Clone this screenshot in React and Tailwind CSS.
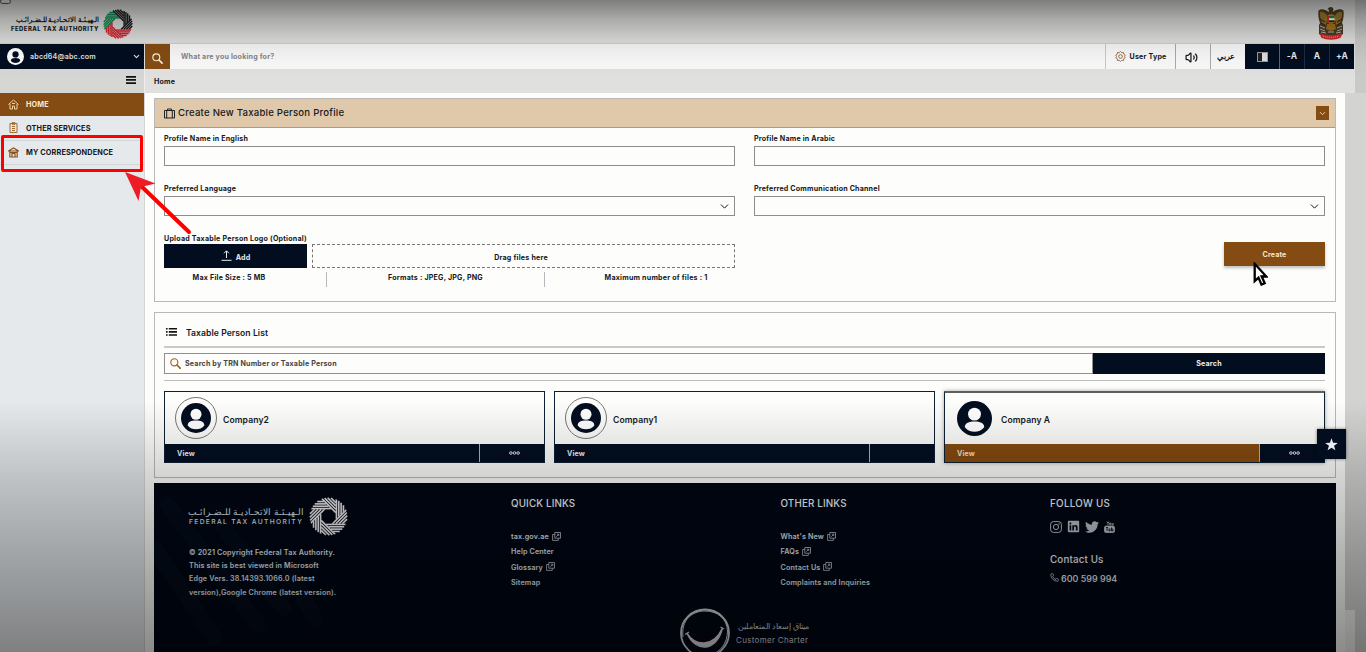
import React from "react";
import { ChevronDown, Volume2, Phone } from "lucide-react";
import { FaLinkedin, FaTwitter } from "react-icons/fa";

const SEGMENTS = ["#0d8a50", "#222", "#1b1b1b", "#1b1b1b", "#d8232f", "#d8232f", "#d8232f", "#0d8a50"];
const MONO = ["#eeeef2", "#eeeef2", "#eeeef2", "#eeeef2", "#eeeef2", "#eeeef2", "#eeeef2", "#eeeef2"];

function Swirl({ className, colors, weight = 1.25 }) {
  const a = 5.6;
  const R = 14.4;
  const lines = [];
  for (let k = 0; k < 8; k++) {
    for (let i = 0; i < 5; i++) {
      const h = a + 0.5 + i * 1.8;
      lines.push(
        <line
          key={k + "-" + i}
          x1={-Math.sqrt(Math.max(0, R * R - h * h))}
          x2={1.414 * a - h}
          y1={-h}
          y2={-h}
          stroke={colors[k]}
          strokeWidth={weight}
          transform={"rotate(" + k * 45 + ")"}
        />
      );
    }
  }
  return (
    <svg viewBox="-15 -15 30 30" className={className}>
      {lines}
    </svg>
  );
}

function Avatar({ className, bg = "#020e20", fg = "#fff" }) {
  return (
    <svg viewBox="0 0 36 36" className={className}>
      <circle cx="18" cy="18" r="18" fill={bg} />
      <circle cx="18" cy="13.500" r="6.600" fill={fg} />
      <path d="M8 27c0-4.600 4.500-6 10-6s10 1.400 10 6c-2.600 3.200-6 4.600-10 4.600S10.600 30.200 8 27z" fill={fg} />
    </svg>
  );
}

function Emblem() {
  return (
    <svg viewBox="0 0 26 33" className="h-[33px] w-[26px]">
      <path d="M13 0c-2 0-3 1-3.500 2.500l1.600.3L10.500 5C7 2 3 1.500.5 3.500 0 8 .5 12 2 16l-1 2v9l4 3h16l4-3v-9l-1-2c1.500-4 2-8 1.500-12.500C23 1.500 18 2 15 5l.5-3C15 .8 14 0 13 0z" fill="#4a3d25" />
      <path d="M2 5c3-1 6 1 7 4l-1 9-4-2C2.500 12 1.700 9 2 5zM24 5c-3-1-6 1-7 4l1 9 4-2c1.500-4 2.300-7 2-11z" fill="#9a7428" />
      <path d="M2 12l5 3M3 16l4 2M24 12l-5 3M23 16l-4 2" stroke="#3b2f1a" strokeWidth="1.200" />
      <path d="M2 19l5 2M2 22l5 2M3 25l5 1M24 19l-5 2M24 22l-5 2M23 25l-5 1M10 25h6" stroke="#b9b7b0" strokeWidth="1" />
      <path d="M9 17h8l1 5-5 2-5-2z" fill="#a5731e" />
      <circle cx="13" cy="12" r="4.800" fill="#b9892c" />
      <path d="M10 9h6.500v2.200H10z" fill="#16884c" />
      <path d="M10 11.200h6.500v2.200H10z" fill="#fff" />
      <path d="M10 13.400h6.500v1.800H10z" fill="#222" />
      <path d="M9 8.800h2v6.800H9z" fill="#dd2b2b" />
      <path d="M2 26c7 3 15 3 22 0l-1 4.500c-6 3-14 3-20 0z" fill="#d32a2a" />
      <path d="M5 29c5 1.600 11 1.600 16 0" stroke="#f0d5c8" strokeWidth=".7" fill="none" strokeDasharray="1 1" />
    </svg>
  );
}

function Gear() {
  return (
    <svg viewBox="0 0 24 24" className="h-[11px] w-[11px]" fill="none" stroke="#8a5a2a" strokeWidth="1.800">
      <path d="M12 1l2.800 2.700 3.800-.3.500 3.700 3.200 2L20.800 12l1.500 2.900-3.200 2-.5 3.700-3.800-.3L12 23l-2.800-2.700-3.800.3-.5-3.700-3.200-2L3.200 12 1.700 9.100l3.200-2 .5-3.700 3.800.3z" />
      <circle cx="12" cy="12" r="4" />
    </svg>
  );
}

function External() {
  return (
    <svg viewBox="0 0 9 9" className="mb-[2px] h-[9px] w-[9px]" fill="none" stroke="#c6ced8" strokeWidth=".8">
      <path d="M2.800.5h5.700v5.700H2.800zM2.800 2.500H.6v5.900h5.700V6.300M4.300 4.700l2.400-2.400M4.900 2.200h1.900v1.900" />
    </svg>
  );
}

function Dots() {
  return (
    <svg viewBox="0 0 11 4" className="h-1 w-[11px]" fill="none" stroke="#dbe2ea" strokeWidth="1">
      <circle cx="1.900" cy="2" r="1.300" />
      <circle cx="5.500" cy="2" r="1.300" />
      <circle cx="9.100" cy="2" r="1.300" />
    </svg>
  );
}

function Field({ label, select }) {
  return (
    <div className="w-[571px]">
      <div className="flex h-[17px] items-center pt-[2px] text-[7.100px] leading-none font-bold tracking-[0.190px] text-[#15181c]">{label}</div>
      <div className="flex h-5 items-center justify-end border border-[#8d8d8d] pr-[3px]">
        {select && <ChevronDown className="h-[13px] w-[13px] text-black" strokeWidth={1.700} />}
      </div>
    </div>
  );
}

function Company({ name, active, dots = true }) {
  return (
    <div className={"flex h-[72px] w-[381px] flex-col border border-[#0d1f33] " + (active ? "border-t-2 border-t-[#5f605c] shadow-[0_0_4px_rgba(0,0,0,0.35)]" : "")}>
      <div className="flex flex-1 items-center pl-[10px]">
        {active ? (
          <Avatar className="ml-[2px] h-[35px] w-[35px]" />
        ) : (
          <div className="flex h-[42px] w-[42px] items-center justify-center rounded-full border border-[#777]">
            <Avatar className="h-[30px] w-[30px]" />
          </div>
        )}
        <span className={"text-[8.600px] font-semibold tracking-[0.100px] text-[#15181c] " + (active ? "ml-[9px] pt-1" : "ml-[6px] pt-[5px]")}>{name}</span>
      </div>
      <div className="flex h-[18px] bg-[#020e20] text-[7.100px] font-bold tracking-[0.100px] text-[#e9edf2]">
        <div className={"flex flex-1 items-center pt-[3px] pl-3 " + (active ? "bg-[#844a10] text-[#f7dfbd]" : "")}>View</div>
        <div className="flex w-[65px] items-center justify-center border-l border-[#a9b3bf] pl-[5px]">{dots && <Dots />}</div>
      </div>
    </div>
  );
}

function FooterLinks({ title, items }) {
  return (
    <div>
      <div className="h-[12px] text-[9.800px] leading-[12px] font-medium tracking-[0.160px] text-[#f0f4f8]">{title}</div>
      <div className="mt-5 flex flex-col">
        {items.map(([t, ext]) => (
          <div key={t} className="flex h-[15.200px] items-center gap-[3px] text-[7.200px] font-semibold tracking-[0.140px] text-[#dde4ec]">
            {t}
            {ext && <External />}
          </div>
        ))}
      </div>
    </div>
  );
}

export default function App() {
  return (
    <div className="relative flex h-[652px] w-[1366px] flex-col overflow-hidden bg-[#fdfdfb] font-['Inter','Noto_Sans',sans-serif] text-[#15181c]">
      <div className="flex h-[93px]">
        <div className="flex w-[1355px] flex-col bg-[#e0e0df]">
          <header className="flex h-[44px] items-center justify-between border-b border-[#cfcfcd] pr-[11px] pl-[11px]">
            <div className="flex items-center gap-1 pt-[5px]">
              <div className="w-[88px]">
                <div dir="rtl" className="h-[9px] text-[6.700px] leading-[9px] font-bold whitespace-nowrap">الـهيـئـة الاتحـاديـة للـضـرائـب</div>
                <div className="text-[5.900px] leading-[8px] font-extrabold tracking-[0.500px] whitespace-nowrap">FEDERAL TAX AUTHORITY</div>
              </div>
              <Swirl className="h-[30px] w-[30px]" colors={SEGMENTS} weight={1.450} />
            </div>
            <div className="pt-1"><Emblem /></div>
          </header>
          <div className="mr-px flex h-[25px] text-[7.100px] font-bold tracking-[0.190px]">
            <div className="flex w-[144px] items-center bg-[#020e20] pr-[3px] pl-[7px] text-[#dfe4e9]">
              <Avatar className="h-[17px] w-[17px]" bg="#fff" fg="#020e20" />
              <span className="ml-[6px] flex-1 pt-px font-semibold">abcd64@abc.com</span>
              <ChevronDown className="h-[9px] w-[9px]" strokeWidth={3} />
            </div>
            <div className="ml-px flex w-[25px] items-center justify-center bg-[#844c13] pt-[3px] text-[#fff3dd]">
              <svg viewBox="0 0 12 12" className="h-[11px] w-[11px]" fill="none" stroke="currentColor"><circle cx="4.700" cy="4.700" r="3.800" strokeWidth="1.200" /><path d="M7.600 7.600L11 11" strokeWidth="1.700" strokeLinecap="round" /></svg>
            </div>
            <div className="flex flex-1 items-center bg-[#f8f8f8] pt-px pl-[11px] text-[#858585]">What are you looking for?</div>
            <div className="flex w-[70px] items-center justify-center gap-1 border-l border-[#c9c9c9] bg-[#f8f8f8]"><Gear /><span className="pt-px">User Type</span></div>
            <div className="flex w-[35px] items-center justify-center border-l border-[#aaa] bg-[#f8f8f8] pt-px pr-[3px]"><Volume2 className="h-[13px] w-[13px]" strokeWidth={2.300} /></div>
            <div className="flex w-[35px] items-center justify-center border-l border-[#aaa] bg-[#f8f8f8] pr-[4px] text-[7.500px] tracking-normal">عربي</div>
            <div className="flex w-[34px] items-center justify-center bg-[#020e20] pt-px">
              <div className="flex h-[10px] w-[11px] border border-[#999]"><span className="flex-1 bg-[#222]" /><span className="flex-1 bg-[#ddd]" /></div>
            </div>
            <div className="flex w-[25px] items-center justify-center border-l border-[#53657d] bg-[#020e20] text-[8.500px] text-[#e4e8ec]">-A</div>
            <div className="flex w-[25px] items-center justify-center border-l border-[#1c2c42] bg-[#020e20] text-[8.500px] text-[#e4e8ec]">A</div>
            <div className="flex w-[25px] items-center justify-center border-l border-[#1c2c42] bg-[#020e20] text-[8.500px] text-[#e4e8ec]">+A</div>
          </div>
          <div className="flex h-6">
            <div className="flex w-[144px] items-center justify-end bg-[#d6d6d5] pr-2 pb-[3px]">
              <svg viewBox="0 0 10 8" className="h-2 w-[10px]" fill="#111"><path d="M0 0h10v1.700H0zM0 3.100h10v1.700H0zM0 6.200h10v1.700H0z" /></svg>
            </div>
            <div className="flex flex-1 items-center border-l border-[#eee] pt-[3px] pl-[9px] text-[7.100px] font-bold tracking-[0.190px]">Home</div>
          </div>
        </div>
        <div className="flex-1 bg-[#c9c9c8]" />
      </div>

      <div className="flex min-h-0 flex-1">
        <nav className="w-[145px] border-r border-[#d6d6d4] bg-[#e5e9ec] text-[7.300px] font-bold tracking-[0.140px]">
          <div className="flex h-[23px] items-center gap-[7px] bg-[#844c13] pl-2 text-[#fbe9d3]">
            <svg viewBox="0 0 11 11" className="h-[11px] w-[11px]" fill="none" stroke="#f3cf9d" strokeWidth="1"><path d="M.5 5.500l5-4.500 5 4.500M2 5v5h2.500V7h2v3H9V5M4 4.500h3" /></svg>
            <span className="pt-px">HOME</span>
          </div>
          <div className="flex h-[25px] items-center gap-[7px] border-b border-[#d3d6d8] pl-2">
            <svg viewBox="0 0 11 11" className="mb-px h-[11px] w-[11px]" fill="none" stroke="#a06c34" strokeWidth="1"><path d="M2 1.500h7v9H2zM4 .7h3v1.600H4zM4 4.500h3M4 6.500h3M4 8.500h3" /></svg>
            <span className="pt-[3px]">OTHER SERVICES</span>
          </div>
          <div className="flex h-6 items-center gap-[7px] border-b border-[#d3d6d8] pl-2">
            <svg viewBox="0 0 11 11" className="mb-px h-[11px] w-[11px]" fill="none" stroke="#8a531b" strokeWidth="1.200"><path d="M.5 4L5.500 1l5 3zM1.800 4.500V10h7.400V4.500M4 9.500v-3h3v3M1 4h9M2 5.500h7" /></svg>
            <span className="pt-[2px]">MY CORRESPONDENCE</span>
          </div>
        </nav>

        <main className="flex w-[1200px] flex-col pt-[5px] pr-[9px] pl-[9px]">
          <section className="flex h-[204px] flex-col border border-[#b9b9b8]">
            <div className="flex h-[29px] items-center border-b border-[#999fa0] bg-[#dfc9aa] pr-[6px] pl-[9px]">
              <svg viewBox="0 0 11 11" className="h-[11px] w-[11px]" fill="none" stroke="#222" strokeWidth="1"><path d="M.5 2.500h10v7.500H.5zM3.500 2.500V1h4v1.500M2.700 2.500V10M8.300 2.500V10" /></svg>
              <span className="ml-[3px] flex-1 pt-px text-[9.600px] font-medium tracking-[0.220px]">Create New Taxable Person Profile</span>
              <div className="flex h-[14px] w-[13px] items-center justify-center bg-[#844c13]"><ChevronDown className="h-[9px] w-[9px] text-[#f3d7b0]" strokeWidth={2.500} /></div>
            </div>
            <div className="flex flex-col pt-px pr-[10px] pl-[9px]">
              <div className="flex gap-[19px]">
                <Field label="Profile Name in English" />
                <Field label="Profile Name in Arabic" />
              </div>
              <div className="mt-[13px] flex gap-[19px]">
                <Field label="Preferred Language" select />
                <Field label="Preferred Communication Channel" select />
              </div>
              <div className="mt-[14px] flex justify-between">
                <div className="w-[571px] text-[7.100px] font-bold tracking-[0.220px]">
                  <div className="flex h-[14px] items-center pt-1">Upload Taxable Person Logo (Optional)</div>
                  <div className="flex h-6 gap-[5px]">
                    <div className="flex w-[143px] items-center justify-center gap-1 bg-[#020e20] text-[#e9edf2]">
                      <svg viewBox="0 0 11 11" className="mb-px h-[11px] w-[11px]" fill="none" stroke="#e9edf2" strokeWidth="1"><path d="M.5 10.300h10M5.500 8V1M3 3.300L5.500.8 8 3.300" /></svg>
                      <span className="pt-[4px]">Add</span>
                    </div>
                    <div className="flex flex-1 items-center justify-center border border-dashed border-[#777] pt-[4px] pr-[5px]">Drag files here</div>
                  </div>
                  <div className="flex h-[19px] pt-1">
                    <div className="flex w-[163px] justify-center border-r border-[#b5b9bd] pr-8 leading-[11px]">Max File Size : 5 MB</div>
                    <div className="flex w-[218px] justify-center border-r border-[#b5b9bd] leading-[11px]">Formats : JPEG, JPG, PNG</div>
                    <div className="flex flex-1 justify-center pl-[32px] leading-[11px]">Maximum number of files : 1</div>
                  </div>
                </div>
                <div className="mt-3 flex h-6 w-[101px] items-center justify-center bg-[#844c13] pt-[2px] text-[7.100px] font-bold tracking-[0.140px] text-[#fbe3c3] shadow-[0_2px_3px_rgba(0,0,0,0.25)]">Create</div>
              </div>
            </div>
          </section>

          <section className="mt-[10px] flex h-[166px] flex-col border border-[#b9b9b8] pr-[10px] pl-[9px]">
            <div className="flex h-[35px] items-center gap-[9px] border-b-2 border-[#c9c9c8] pt-[5px] pl-[2px] text-[8.600px] font-semibold tracking-[0.060px]">
              <svg viewBox="0 0 11 8" className="h-2 w-[11px]" fill="#111"><path d="M0 0h1.600v1.600H0zM2.800 0H11v1.600H2.800zM0 3.100h1.600v1.600H0zM2.800 3.100H11v1.600H2.800zM0 6.200h1.600v1.600H0zM2.800 6.200H11v1.600H2.800z" /></svg>
              <span className="pt-[2px]">Taxable Person List</span>
            </div>
            <div className="mt-[5px] flex h-[21px] text-[7.100px] font-bold tracking-[0.190px]">
              <div className="flex flex-1 items-center gap-1 border border-[#909090] pl-[5px] text-[#454545]">
                <svg viewBox="0 0 12 12" className="h-[11px] w-[11px]" fill="none" stroke="#9a6425"><circle cx="4.700" cy="4.700" r="3.900" strokeWidth="1.200" /><path d="M7.600 7.600L11.300 11.300" strokeWidth="1.800" strokeLinecap="round" /></svg>
                <span className="pt-[2px]">Search by TRN Number or Taxable Person</span>
              </div>
              <div className="flex w-[232px] items-center justify-center bg-[#020e20] pt-px text-[#e9edf2]">Search</div>
            </div>
            <div className="mt-[6px] mb-[10px] h-px bg-[#bdbdbc]" />
            <div className="flex gap-[9px]">
              <Company name="Company2" />
              <Company name="Company1" dots={false} />
              <Company name="Company A" active />
            </div>
          </section>

          <footer className="relative mt-[5px] flex flex-1 flex-col overflow-hidden bg-[#000613]">
            <svg viewBox="0 0 200 168" className="absolute top-0 left-0 h-[168px] w-[200px]" fill="none" stroke="#0a1626" strokeWidth="16" strokeLinecap="round" opacity=".35">
              <path d="M14 22l90 120M0 65l60 90M70 45l60 80M130 75l30 60" />
            </svg>
            <div className="relative grid h-[116px] grid-cols-[357px_269.500px_269.500px_1fr] pt-[15px]">
              <div className="pl-[35px] text-[#dde4ec]">
                <div className="-mt-[2px] flex h-[40px] items-center gap-[5px]">
                  <div className="w-[115px]">
                    <div dir="rtl" className="text-[9.200px] leading-[11px] whitespace-nowrap">الـهيـئـة الاتحـاديـة للـضـرائـب</div>
                    <div className="text-[6.700px] leading-[10px] font-medium tracking-[1.350px] whitespace-nowrap">FEDERAL TAX AUTHORITY</div>
                  </div>
                  <Swirl className="h-[39px] w-[39px]" colors={MONO} />
                </div>
                <div className="mt-[10px] text-[7.200px] leading-[13.200px] font-semibold tracking-[0.160px]">
                  © 2021 Copyright Federal Tax Authority.<br />This site is best viewed in Microsoft<br />Edge Vers. 38.14393.1066.0 (latest<br />version),Google Chrome (latest version).
                </div>
              </div>
              <FooterLinks title="QUICK LINKS" items={[["tax.gov.ae", true], ["Help Center", false], ["Glossary", true], ["Sitemap", false]]} />
              <FooterLinks title="OTHER LINKS" items={[["What's New", true], ["FAQs", true], ["Contact Us", true], ["Complaints and Inquiries", false]]} />
              <div className="text-[#f0f4f8]">
                <div className="text-[9.800px] leading-[12px] font-medium tracking-[0.300px]">FOLLOW US</div>
                <div className="mt-[10px] flex h-[13px] items-center gap-[5px] text-[#bcc0c8]">
                  <svg viewBox="0 0 12 12" className="h-3 w-3" fill="none" stroke="currentColor" strokeWidth="1"><rect x=".6" y=".6" width="10.800" height="10.800" rx="2.800" /><circle cx="6" cy="6" r="2.600" /><circle cx="9" cy="3" r=".3" /></svg>
                  <FaLinkedin className="h-[13px] w-[13px]" />
                  <FaTwitter className="h-[14px] w-[14px]" />
                  <svg viewBox="0 0 11 12" className="h-3 w-[11px]" fill="none" stroke="currentColor" strokeWidth=".8"><path d="M3 .5l1 1.700L5 .5M4 2.200V4M5.700 2v1.700h1V2zM8 2v1.800h1.200V2" /><rect x=".5" y="5" width="10" height="6.500" rx="1.500" fill="currentColor" /><path d="M2 6.500h2M3 6.500V10M5 7.500V10h1V7.500M7.500 6.500V10H9V8H7.500" stroke="#000613" /></svg>
                </div>
                <div className="mt-[21px] text-[9.800px] leading-[12px] font-medium tracking-[0.140px]">Contact Us</div>
                <div className="mt-[6px] flex items-center gap-[2px] text-[9px] leading-[13px] font-medium"><Phone className="mb-[2px] h-[9px] w-[9px]" strokeWidth={1.800} />600 599 994</div>
              </div>
            </div>
            <div className="relative mt-[9px] flex h-[50px] shrink-0 items-start gap-[6px] pl-[526px] text-[#cfd3d9]">
              <svg viewBox="0 0 50 50" className="h-[50px] w-[50px] shrink-0" fill="none" stroke="#dcdee2">
                <ellipse cx="25" cy="25" rx="24" ry="23.500" strokeWidth="1.800" />
                <path d="M3 29C1 12 12 3 25 3s22 8 22.500 20c0 12-7 21-17 24" strokeWidth="1" />
                <path d="M7 25C15 38 33 40 42.500 20 37 44 15 45 7 25z" fill="#dcdee2" strokeWidth="1.300" />
                <path d="M5 26.500l4-2.500M40.500 19l3.500 2" strokeWidth="1.400" />
              </svg>
              <div className="w-[73px] pt-[12px]">
                <div dir="rtl" className="text-[7.700px] leading-[13px] font-medium whitespace-nowrap">ميثاق إسعاد المتعاملين</div>
                <div className="text-[8px] leading-[14px] tracking-[0.300px] whitespace-nowrap">Customer Charter</div>
              </div>
            </div>
          </footer>
        </main>

        <div className="flex flex-1 flex-col justify-end bg-[#d3d3d2]">
          <div className="h-[42px] w-[10px] bg-[#f3f3f1]" />
        </div>
      </div>

      <div className="pointer-events-none absolute inset-x-0 top-0 h-[95px] bg-[linear-gradient(to_bottom,rgba(0,0,0,0.44)_0px,rgba(0,0,0,0.23)_20px,rgba(0,0,0,0.08)_40px,rgba(0,0,0,0.02)_60px,rgba(0,0,0,0)_80px)]" />
      <div className="pointer-events-none absolute inset-x-0 bottom-0 h-[252px] bg-[linear-gradient(to_bottom,rgba(0,0,0,0)_0%,rgba(0,0,0,0.16)_30%,rgba(0,0,0,0.29)_60%,rgba(0,0,0,0.37)_80%,rgba(0,0,0,0.45)_100%)]" />
      <div className="absolute -top-px left-0 h-[5px] w-[11px] rounded-sm border border-[#333] bg-[#858585]" />

      <div className="absolute top-[429px] left-[1317px] flex h-[30px] w-[29px] items-center justify-center bg-[#020e20] shadow-[0_0_3px_rgba(0,0,0,0.5)]">
        <svg viewBox="0 0 24 24" className="h-[13px] w-[13px]" fill="#e8edf2"><path d="M12 .5l2.900 8.300 8.800.2-7 5.300 2.500 8.500-7.200-5-7.200 5 2.500-8.500-7-5.300 8.800-.2z" /></svg>
      </div>
      <div className="absolute top-[135px] left-[1px] h-[37px] w-[142px] rounded-[2px] border-3 border-[#ff0000]" />
      <svg viewBox="0 0 70 70" className="absolute top-[168px] left-[122px] h-[70px] w-[70px]">
        <path d="M18 17L67 64" stroke="#ff0000" strokeWidth="4" strokeLinecap="round" />
        <path d="M3 4l30.500 11.500L19 19l-2.500 14z" fill="#ee1c24" />
      </svg>
      <svg viewBox="0 0 14 24" className="absolute top-[262px] left-[1253px] h-6 w-[15px]">
        <path d="M1.200 1.800v17.400l3.800-3.600 3 7 3.200-1.400-3-6.700h4.600z" fill="#fff" stroke="#000" strokeWidth="2.300" />
      </svg>
    </div>
  );
}
